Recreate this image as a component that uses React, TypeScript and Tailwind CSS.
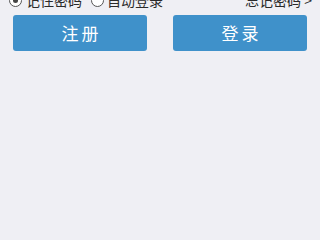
import React from 'react';

function Radio({checked}: {checked?: boolean}) {
  return (
    <span className="flex h-[13px] w-[13px] shrink-0 items-center justify-center rounded-full border border-[#555] bg-white">
      {checked && <span className="h-[5px] w-[5px] rounded-full bg-[#444]" />}
    </span>
  );
}

export default function App() {
  return (
    <div
      className="flex min-h-screen w-full flex-col bg-[#efeff4]"
      style={{fontFamily: '"Noto Sans CJK SC", "Noto Sans", sans-serif'}}
    >
      {/* options row, partly scrolled out of view at the top */}
      <div className="flex h-[10px] items-end overflow-hidden">
        <div className="flex h-5 w-full shrink-0 items-center pl-[9px] pr-[8px] text-[14px] text-[#2a2a2a]">
          <label className="flex items-center gap-[4px]">
            <Radio checked />
            <span>记住密码</span>
          </label>
          <label className="ml-[9px] flex items-center gap-[3px]">
            <Radio />
            <span>自动登录</span>
          </label>
          <span className="ml-auto">忘记密码 &gt;</span>
        </div>
      </div>
      <div className="mt-[5px] flex gap-[26px] px-[13px]">
        <button className="flex h-[36px] flex-1 items-center justify-center rounded-[3px] bg-[#3f91ca] pl-[3px] text-[17px] tracking-[3px] text-white">
          注册
        </button>
        <button className="flex h-[36px] flex-1 items-center justify-center rounded-[3px] bg-[#3f91ca] pl-[3px] text-[17px] tracking-[3px] text-white">
          登录
        </button>
      </div>
    </div>
  );
}
